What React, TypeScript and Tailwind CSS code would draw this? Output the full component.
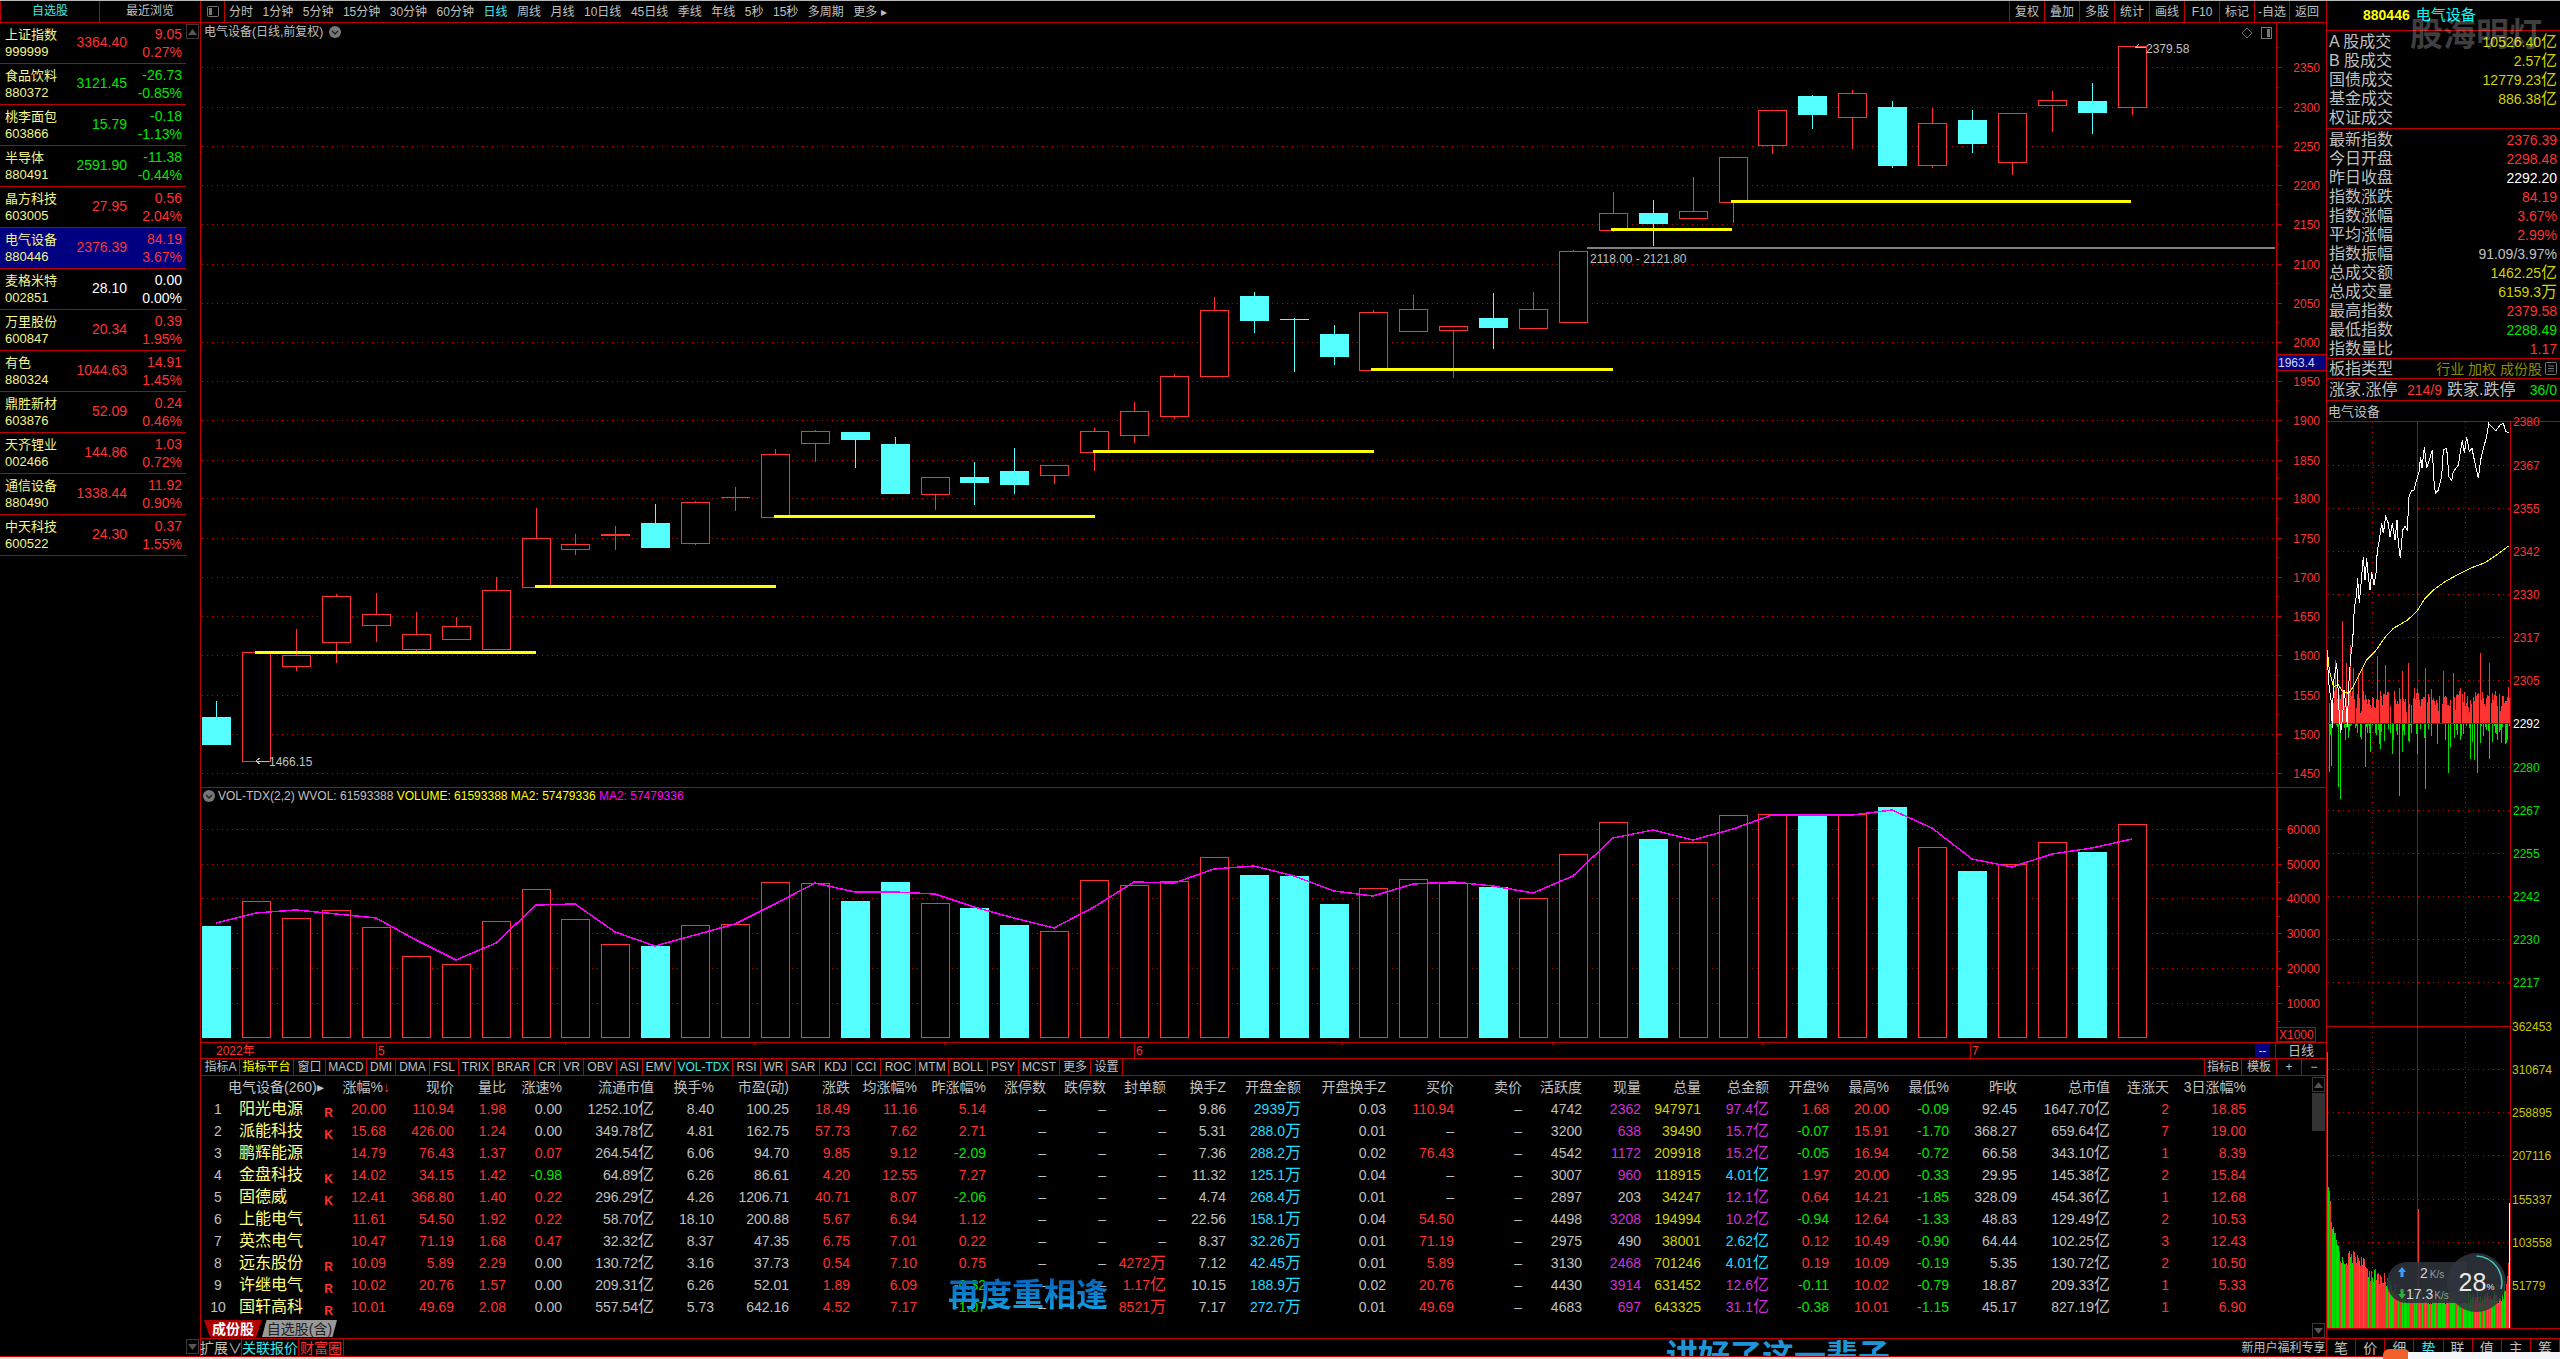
const RED = "#ff3232";
const CYAN = "#54ffff";
const LINE = "#c00000";
const GREEN = "#00e600";
const GRAY = "#c0c0c0";

const tRed = "text-[#ff3232]";
const tGreen = "text-[#00e600]";
const tGray = "text-[#c0c0c0]";
const tCyan = "text-[#1fdcff]";
const tYellow = "text-[#d2d200]";
const tMagenta = "text-[#d030d8]";

const watch = [
  ["上证指数", "999999", "3364.40", "9.05", "0.27%", "r"],
  ["食品饮料", "880372", "3121.45", "-26.73", "-0.85%", "g"],
  ["桃李面包", "603866", "15.79", "-0.18", "-1.13%", "g"],
  ["半导体", "880491", "2591.90", "-11.38", "-0.44%", "g"],
  ["晶方科技", "603005", "27.95", "0.56", "2.04%", "r"],
  ["电气设备", "880446", "2376.39", "84.19", "3.67%", "r"],
  ["麦格米特", "002851", "28.10", "0.00", "0.00%", "w"],
  ["万里股份", "600847", "20.34", "0.39", "1.95%", "r"],
  ["有色", "880324", "1044.63", "14.91", "1.45%", "r"],
  ["鼎胜新材", "603876", "52.09", "0.24", "0.46%", "r"],
  ["天齐锂业", "002466", "144.86", "1.03", "0.72%", "r"],
  ["通信设备", "880490", "1338.44", "11.92", "0.90%", "r"],
  ["中天科技", "600522", "24.30", "0.37", "1.55%", "r"],
];

// top, bottom, high, low, up
const candles: number[][] = [
  [717, 744, 701, 744, 0], [652, 761, 652, 761, 1], [655, 666, 629, 671, 1], [596, 642, 594, 663, 1],
  [614, 625, 593, 642, 1], [634, 649, 612, 651, 1], [626, 639, 617, 639, 1], [590, 649, 577, 650, 1],
  [538, 587, 508, 587, 1], [544, 549, 534, 555, 1], [534, 535, 526, 550, 1], [523, 547, 504, 547, 0],
  [502, 543, 501, 545, 1], [497, 497, 487, 511, 1], [454, 517, 449, 517, 1], [431, 443, 430, 462, 1],
  [432, 439, 432, 468, 0], [444, 493, 437, 494, 0], [477, 494, 477, 510, 1], [477, 482, 462, 505, 0],
  [471, 484, 448, 494, 0], [465, 475, 465, 484, 1], [431, 452, 428, 471, 1], [411, 435, 402, 443, 1],
  [376, 416, 374, 419, 1], [310, 376, 297, 376, 1], [296, 320, 292, 333, 0], [319, 319, 318, 372, 0],
  [334, 356, 325, 365, 0], [312, 370, 310, 370, 1], [309, 331, 295, 331, 1], [326, 330, 326, 378, 1],
  [318, 327, 293, 349, 0], [309, 328, 292, 328, 1], [251, 322, 250, 322, 1], [213, 230, 192, 232, 1],
  [213, 223, 200, 246, 0], [211, 218, 177, 218, 1], [157, 202, 157, 223, 1], [110, 145, 110, 154, 1],
  [96, 114, 95, 129, 0], [93, 117, 90, 149, 1], [107, 165, 101, 168, 0], [123, 165, 108, 168, 1],
  [120, 143, 110, 153, 0], [113, 162, 113, 175, 1], [100, 105, 91, 132, 1], [101, 112, 83, 134, 0],
  [46, 107, 46, 115, 1],
];

const volTop = [
  926, 901, 918, 910, 927, 956, 964, 921, 889, 919, 944, 946, 925, 924, 882, 883, 901, 882, 903, 908, 925, 931, 880, 885, 881,
  857, 875, 876, 904, 888, 879, 883, 887, 898, 854, 822, 839, 842, 815, 814, 816, 814, 807, 847, 871, 864, 842, 852, 824,
];
const volMa = [
  923, 913, 910, 914, 918, 940, 960, 943, 905, 904, 932, 946, 935, 924, 904, 883, 892, 892, 894, 907, 918, 928, 907, 882, 883,
  869, 866, 876, 891, 896, 884, 882, 886, 893, 876, 838, 830, 840, 829, 815, 815, 815, 810, 828, 859, 867, 854, 848, 839,
];

const centerX = (i: number) => Math.round(216.3 + 39.9 * i);

const priceTicks: [string, number][] = [
  ["2350", 67], ["2300", 107], ["2250", 146], ["2200", 185], ["2150", 224], ["2100", 264], ["2050", 303], ["2000", 342],
  ["1950", 381], ["1900", 420], ["1850", 460], ["1800", 498], ["1750", 538], ["1700", 577], ["1650", 616], ["1600", 655],
  ["1550", 695], ["1500", 734], ["1450", 773],
];
const volTicks: [string, number][] = [["60000", 829], ["50000", 864], ["40000", 898], ["30000", 933], ["20000", 968], ["10000", 1003]];

const supports = [
  [255, 536, 652], [535, 776, 586], [774, 1095, 516], [1093, 1374, 451], [1371, 1613, 369], [1611, 1732, 229], [1731, 2131, 201],
];

const noise = (i: number) => {
  const v = Math.sin(i * 12.9898) * 43758.5453;
  return v - Math.floor(v);
};

// page-zoomed coords of the intraday chart, origin 2270,390 at 3x
const zoomPts = (pts: number[][]) => pts.map(([x, y]) => `${2270 + x / 3},${390 + y / 3}`).join(" ");
const whiteLine = [
  [172, 780], [175, 870], [183, 930], [187, 1015], [190, 880], [195, 850], [200, 820], [203, 870], [207, 960], [212, 1030], [218, 980],
  [222, 900], [228, 950], [232, 1010], [236, 890], [240, 830], [244, 780], [248, 760], [250, 710], [253, 655], [260, 610], [263, 565],
  [268, 640], [274, 570], [280, 500], [285, 570], [290, 505], [295, 560], [300, 600], [305, 545], [312, 585], [318, 550], [322, 480],
  [328, 450], [335, 400], [340, 430], [347, 380], [355, 400], [360, 440], [367, 400], [375, 450], [381, 390], [385, 460], [391, 505],
  [398, 420], [405, 408], [412, 420], [417, 320], [425, 300], [432, 300], [440, 270], [447, 245], [452, 200], [456, 235], [463, 170],
  [470, 235], [478, 210], [487, 180], [493, 290], [497, 310], [505, 300], [515, 260], [520, 180], [530, 175], [537, 260], [545, 272],
  [550, 245], [565, 225], [577, 150], [583, 190], [590, 140], [598, 185], [606, 175], [615, 220], [625, 265], [632, 210], [640, 175],
  [650, 140], [656, 100], [665, 110], [678, 122], [690, 105], [700, 100], [708, 125], [716, 127],
];
const yellowLine = [
  [172, 780], [178, 840], [190, 890], [205, 885], [218, 905], [236, 910], [250, 890], [265, 860], [290, 810], [315, 785], [345, 742],
  [370, 715], [410, 692], [440, 665], [465, 625], [490, 600], [525, 575], [570, 550], [600, 535], [645, 518], [680, 495], [716, 468],
];
const redSpikes = [[217, 102], [240, 78], [195, 63], [320, 67], [345, 58], [415, 60], [465, 55], [395, 52], [630, 70], [656, 60], [520, 52], [550, 50], [250, 55], [265, 50], [275, 55], [228, 60]];
const greenSpikes = [[211, 75], [387, 72], [465, 65], [203, 63], [620, 49], [535, 49], [658, 35], [285, 43], [177, 48], [183, 42], [300, 28], [367, 30], [540, 23], [600, 35], [612, 36], [395, 28], [440, 30], [330, 25]];

const tickBars = Array.from({ length: 182 }, (_, i) => {
  const x = 2328 + i;
  const z = (x - 2270) * 3;
  const spikeAt = (list: number[][]) => list.find(([sx]) => Math.abs(sx - z) < 2)?.[1] ?? 0;
  const wave = 8 + 10 * Math.abs(Math.sin(i / 5));
  const r = noise(i) < 0.12 ? 0 : wave + noise(i + 500) * 18;
  const g = noise(i + 900) < 0.5 ? 0 : Math.pow(noise(i + 1300), 1.5) * 20;
  return { x, red: Math.max(r, spikeAt(redSpikes)), green: Math.max(g, spikeAt(greenSpikes)) };
});

const volEnv = [[2328, 1177], [2332, 1223], [2337, 1238], [2342, 1255], [2350, 1250], [2358, 1250], [2370, 1267], [2383, 1272], [2403, 1290], [2503, 1290], [2508, 1258]];
const envAt = (x: number) => {
  for (let i = 1; i < volEnv.length; i++) {
    if (x <= volEnv[i][0]) {
      const [x0, y0] = volEnv[i - 1];
      const [x1, y1] = volEnv[i];
      return y0 + ((y1 - y0) * (x - x0)) / (x1 - x0);
    }
  }
  return 1258;
};
const dayVol = Array.from({ length: 181 }, (_, i) => {
  const x = 2328 + i;
  const top = envAt(x) + noise(i + 77) * 14;
  return { x, top, color: noise(i + 31) < 0.5 ? "#ff3232" : "#00e000" };
});

const intradayLabels: [string, number, string][] = [
  ["2380", 421, RED], ["2367", 465, RED], ["2355", 508, RED], ["2342", 551, RED], ["2330", 594, RED], ["2317", 637, RED], ["2305", 680, RED],
  ["2292", 723, "#ffffff"], ["2280", 767, GREEN], ["2267", 810, GREEN], ["2255", 853, GREEN], ["2242", 896, GREEN], ["2230", 939, GREEN], ["2217", 982, GREEN],
];
const intradayVol: [string, number][] = [["362453", 1026], ["310674", 1069], ["258895", 1112], ["207116", 1155], ["155337", 1199], ["103558", 1242], ["51779", 1285]];

const ROW_GRID =
  "grid grid-cols-[34px_86px_15px_50px_68px_52px_56px_92px_60px_75px_61px_67px_69px_60px_60px_60px_60px_75px_85px_68px_68px_60px_59px_60px_68px_60px_60px_60px_68px_93px_59px_77px]";

const columns = ["涨幅%", "现价", "量比", "涨速%", "流通市值", "换手%", "市盈(动)", "涨跌", "均涨幅%", "昨涨幅%", "涨停数", "跌停数", "封单额", "换手Z", "开盘金额", "开盘换手Z", "买价", "卖价", "活跃度", "现量", "总量", "总金额", "开盘%", "最高%", "最低%", "昨收", "总市值", "连涨天", "3日涨幅%"];

const stockRows = [
  ["阳光电源", "R", "20.00", "110.94", "1.98", "0.00", "1252.10亿", "8.40", "100.25", "18.49", "11.16", "5.14", "–", "–", "–", "9.86", "2939万", "0.03", "110.94", "–", "4742", "2362", "947971", "97.4亿", "1.68", "20.00", "-0.09", "92.45", "1647.70亿", "2", "18.85"],
  ["派能科技", "K", "15.68", "426.00", "1.24", "0.00", "349.78亿", "4.81", "162.75", "57.73", "7.62", "2.71", "–", "–", "–", "5.31", "288.0万", "0.01", "–", "–", "3200", "638", "39490", "15.7亿", "-0.07", "15.91", "-1.70", "368.27", "659.64亿", "7", "19.00"],
  ["鹏辉能源", "", "14.79", "76.43", "1.37", "0.07", "264.54亿", "6.06", "94.70", "9.85", "9.12", "-2.09", "–", "–", "–", "7.36", "288.2万", "0.02", "76.43", "–", "4542", "1172", "209918", "15.2亿", "-0.05", "16.94", "-0.72", "66.58", "343.10亿", "1", "8.39"],
  ["金盘科技", "K", "14.02", "34.15", "1.42", "-0.98", "64.89亿", "6.26", "86.61", "4.20", "12.55", "7.27", "–", "–", "–", "11.32", "125.1万", "0.04", "–", "–", "3007", "960", "118915", "4.01亿", "1.97", "20.00", "-0.33", "29.95", "145.38亿", "2", "15.84"],
  ["固德威", "K", "12.41", "368.80", "1.40", "0.22", "296.29亿", "4.26", "1206.71", "40.71", "8.07", "-2.06", "–", "–", "–", "4.74", "268.4万", "0.01", "–", "–", "2897", "203", "34247", "12.1亿", "0.64", "14.21", "-1.85", "328.09", "454.36亿", "1", "12.68"],
  ["上能电气", "", "11.61", "54.50", "1.92", "0.22", "58.70亿", "18.10", "200.88", "5.67", "6.94", "1.12", "–", "–", "–", "22.56", "158.1万", "0.04", "54.50", "–", "4498", "3208", "194994", "10.2亿", "-0.94", "12.64", "-1.33", "48.83", "129.49亿", "2", "10.53"],
  ["英杰电气", "", "10.47", "71.19", "1.68", "0.47", "32.32亿", "8.37", "47.35", "6.75", "7.01", "0.22", "–", "–", "–", "8.37", "32.26万", "0.01", "71.19", "–", "2975", "490", "38001", "2.62亿", "0.12", "10.49", "-0.90", "64.44", "102.25亿", "3", "12.43"],
  ["远东股份", "R", "10.09", "5.89", "2.29", "0.00", "130.72亿", "3.16", "37.73", "0.54", "7.10", "0.75", "–", "–", "4272万", "7.12", "42.45万", "0.01", "5.89", "–", "3130", "2468", "701246", "4.01亿", "0.19", "10.09", "-0.19", "5.35", "130.72亿", "2", "10.50"],
  ["许继电气", "R", "10.02", "20.76", "1.57", "0.00", "209.31亿", "6.26", "52.01", "1.89", "6.09", "-0.32", "–", "–", "1.17亿", "10.15", "188.9万", "0.02", "20.76", "–", "4430", "3914", "631452", "12.6亿", "-0.11", "10.02", "-0.79", "18.87", "209.33亿", "1", "5.33"],
  ["国轩高科", "R", "10.01", "49.69", "2.08", "0.00", "557.54亿", "5.73", "642.16", "4.52", "7.17", "-1.07", "–", "–", "8521万", "7.17", "272.7万", "0.01", "49.69", "–", "4683", "697", "643325", "31.1亿", "-0.38", "10.01", "-1.15", "45.17", "827.19亿", "1", "6.90"],
];

const signColor = (v: string) => (v.startsWith("-") ? tGreen : v === "0.00" ? tGray : tRed);

function cellColor(col: number, v: string) {
  if (v === "–") return tGray;
  if ([3, 9, 22].includes(col)) return signColor(v);
  if ([0, 1, 2, 7, 8, 12, 16, 23, 27, 28].includes(col)) return tRed;
  if (col === 24) return tGreen;
  if (col === 14) return tCyan;
  if (col === 19) return v === "203" || v === "490" ? tGray : tMagenta;
  if (col === 20) return tYellow;
  if (col === 21) return parseFloat(v) < 5 ? tCyan : tMagenta;
  return tGray;
}

function Num({ value }: { value: string }) {
  const unit = /[亿万]$/.test(value);
  return (
    <>
      {unit ? value.slice(0, -1) : value}
      {unit && <span className="text-[16px]">{value.slice(-1)}</span>}
    </>
  );
}

const infoTop = [
  ["A 股成交", "10526.40亿", tYellow],
  ["B 股成交", "2.57亿", tYellow],
  ["国债成交", "12779.23亿", tYellow],
  ["基金成交", "886.38亿", tYellow],
  ["权证成交", "", tYellow],
];
const infoMid = [
  ["最新指数", "2376.39", tRed],
  ["今日开盘", "2298.48", tRed],
  ["昨日收盘", "2292.20", "text-white"],
  ["指数涨跌", "84.19", tRed],
  ["指数涨幅", "3.67%", tRed],
  ["平均涨幅", "2.99%", tRed],
  ["指数振幅", "91.09/3.97%", tGray],
  ["总成交额", "1462.25亿", tYellow],
  ["总成交量", "6159.3万", tYellow],
  ["最高指数", "2379.58", tRed],
  ["最低指数", "2288.49", tGreen],
  ["指数量比", "1.17", tRed],
];

const periods = ["分时", "1分钟", "5分钟", "15分钟", "30分钟", "60分钟", "日线", "周线", "月线", "10日线", "45日线", "季线", "年线", "5秒", "15秒", "多周期", "更多 ▸"];
const tools = ["复权", "叠加", "多股", "统计", "画线", "F10", "标记", "-自选", "返回"];
const indicators = ["指标A", "指标平台", "窗口", "MACD", "DMI", "DMA", "FSL", "TRIX", "BRAR", "CR", "VR", "OBV", "ASI", "EMV", "VOL-TDX", "RSI", "WR", "SAR", "KDJ", "CCI", "ROC", "MTM", "BOLL", "PSY", "MCST", "更多", "设置"];

function InfoRow({ label, value, color }: { label: string; value: string; color: string }) {
  return (
    <div className="flex h-[19px] items-center justify-between pl-[2px] pr-[3px]">
      <span className={`text-[16px] leading-none ${tGray}`}>{label}</span>
      <span className={`text-[14px] leading-none ${color}`}>
        <Num value={value} />
      </span>
    </div>
  );
}

function ScrollBtn({ down }: { down?: boolean }) {
  return (
    <div className="flex h-[15px] w-[13px] items-center justify-center border border-[#3a3a3a] bg-black">
      <svg width="9" height="6" viewBox="0 0 9 6">
        <path d={down ? "M0 0H9L4.5 6Z" : "M0 6H9L4.5 0Z"} fill="#555" />
      </svg>
    </div>
  );
}

function WatchList() {
  return (
    <aside className="flex w-[200px] shrink-0 flex-col">
      <div className="flex h-[22px] border-b border-[#c00000] text-[12px] leading-[21px]">
        <div className="w-[100px] border-x border-[#c00000] text-center text-[#3fe8e8]">自选股</div>
        <div className={`w-[100px] text-center ${tGray}`}>最近浏览</div>
      </div>
      <div className="flex flex-1">
        <div className="w-[186px]">
          {watch.map(([name, code, price, chg, pct, tone]) => {
            const color = tone === "r" ? tRed : tone === "g" ? tGreen : "text-white";
            return (
              <div key={code} className={`flex h-[41px] border-b border-[#c00000] pb-px pr-[4px] ${code === "880446" ? "bg-[#000080]" : ""}`}>
                <div className="flex w-[77px] flex-col justify-center pl-[5px] text-[13px] leading-[17px] text-[#f5f58c]">
                  <span>{name}</span>
                  <span>{code}</span>
                </div>
                <div className={`flex w-[50px] items-center justify-end text-[14px] ${color}`}>{price}</div>
                <div className={`flex flex-1 flex-col items-end justify-center text-[14px] leading-[18px] ${color}`}>
                  <span>{chg}</span>
                  <span>{pct}</span>
                </div>
              </div>
            );
          })}
        </div>
        <div className="flex flex-1 flex-col justify-between pb-[2px] pt-px">
          <ScrollBtn />
          <ScrollBtn down />
        </div>
      </div>
    </aside>
  );
}

function TopBar() {
  return (
    <div className="flex h-[22px] items-center border-b border-[#c00000] text-[12px] leading-none">
      <div className="flex h-full w-[24px] items-center justify-center border-r border-[#c00000]">
        <svg width="12" height="11" viewBox="0 0 12 11">
          <rect x="0.5" y="0.5" width="11" height="10" rx="1" fill="none" stroke="#777" />
          <rect x="2" y="2" width="3" height="7" fill="#777" />
        </svg>
      </div>
      <div className="flex gap-[9.5px] pl-[4px]">
        {periods.map((p) => (
          <span key={p} className={p === "日线" ? "text-[#3fe8e8]" : tGray}>
            {p}
          </span>
        ))}
      </div>
      <div className="ml-auto flex h-full">
        {tools.map((t) => (
          <div key={t} className={`flex w-[35px] items-center justify-center border-l border-[#c00000] ${tGray}`}>
            {t}
          </div>
        ))}
        <div className="w-[2px]" />
      </div>
    </div>
  );
}

function Dotted({ y, x1, x2 }: { y: number; x1: number; x2: number }) {
  return <line x1={x1} x2={x2} y1={y + 0.5} y2={y + 0.5} stroke="#c80000" strokeDasharray="1 4" />;
}

function KlineChart() {
  return (
    <svg className="block h-[764px] w-[2125px]" viewBox="201 23 2125 764" shapeRendering="crispEdges">
      {priceTicks.map(([, y]) => (
        <Dotted key={y} y={y} x1={202} x2={2275} />
      ))}
      <text x={204} y={36} fontSize={12} fill={GRAY}>电气设备(日线,前复权)</text>
      <circle cx={335} cy={32} r={6} fill="#777" shapeRendering="auto" />
      <path d="M332 31L335 34L338 31" fill="none" stroke="#222" strokeWidth={1.5} shapeRendering="auto" />
      <path d="M2247 28L2252 33L2247 38L2242 33Z" fill="none" stroke="#666" shapeRendering="auto" />
      <rect x={2261.5} y={27.5} width={10} height={11} rx={1} fill="none" stroke="#777" />
      <rect x={2267} y={29} width={3} height={8} fill="#777" />

      {candles.map(([top, bot, hi, lo, up], i) => {
        const cx = centerX(i);
        const color = up ? RED : CYAN;
        return (
          <g key={i}>
            <line x1={cx + 0.5} x2={cx + 0.5} y1={hi} y2={lo} stroke={color} />
            {bot - top <= 0 ? (
              <line x1={cx - 14} x2={cx + 15} y1={top + 0.5} y2={top + 0.5} stroke={color} />
            ) : up ? (
              <rect x={cx - 13.5} y={top + 0.5} width={28} height={bot - top} fill="#000" stroke={RED} />
            ) : (
              <rect x={cx - 14} y={top} width={29} height={bot - top + 1} fill={CYAN} />
            )}
          </g>
        );
      })}

      {supports.map(([x1, x2, y]) => (
        <rect key={x1} x={x1} y={y - 1} width={x2 - x1} height={3} fill="#ffff00" />
      ))}
      <rect x={1587} y={247} width={688} height={2} fill="#808080" />
      <text x={1590} y={263} fontSize={12} fill={GRAY}>2118.00 - 2121.80</text>
      <text x={2146} y={53} fontSize={12} fill={GRAY}>2379.58</text>
      <path d="M2146 47H2136L2139 44" fill="none" stroke={GRAY} />
      <text x={269} y={766} fontSize={12} fill={GRAY}>1466.15</text>
      <path d="M269 761H256M256 761L260 758M256 761L260 764" fill="none" stroke={GRAY} />

      <line x1={2276.5} x2={2276.5} y1={23} y2={787} stroke={LINE} />
      {priceTicks.map(([label, y]) => (
        <g key={label}>
          <line x1={2277} x2={2282} y1={y + 0.5} y2={y + 0.5} stroke={LINE} />
          <line x1={2277} x2={2279} y1={y - 19.5} y2={y - 19.5} stroke={LINE} />
          <text x={2320} y={y + 5} fontSize={12} fill={RED} textAnchor="end">{label}</text>
        </g>
      ))}
      <rect x={2276.5} y={354.5} width={50} height={16} fill="#000080" stroke={LINE} />
      <text x={2278} y={367} fontSize={12} fill="#d8d8ff">1963.4</text>
    </svg>
  );
}

function VolumeChart() {
  return (
    <svg className="block h-[254px] w-[2125px]" viewBox="201 788 2125 254" shapeRendering="crispEdges">
      {volTicks.map(([, y]) => (
        <Dotted key={y} y={y} x1={202} x2={2275} />
      ))}
      <circle cx={209} cy={796} r={6} fill="#777" shapeRendering="auto" />
      <path d="M206 795L209 798L212 795" fill="none" stroke="#222" strokeWidth={1.5} shapeRendering="auto" />
      <text x={218} y={800} fontSize={12} fill={GRAY}>
        VOL-TDX(2,2) WVOL: 61593388 <tspan fill="#ffff00">VOLUME: 61593388 MA2: 57479336</tspan> <tspan fill="#ff00ff">MA2: 57479336</tspan>
      </text>
      {volTop.map((top, i) => {
        const cx = centerX(i);
        return candles[i][4] ? (
          <rect key={i} x={cx - 13.5} y={top + 0.5} width={28} height={1037 - top} fill="#000" stroke={RED} />
        ) : (
          <rect key={i} x={cx - 14} y={top} width={29} height={1038 - top} fill={CYAN} />
        );
      })}
      <polyline points={volMa.map((y, i) => `${centerX(i)},${y}`).join(" ")} fill="none" stroke="#ff00ff" strokeWidth={1.5} />

      <rect x={2276} y={788} width={2} height={254} fill={LINE} />
      {volTicks.map(([label, y]) => (
        <g key={label}>
          <line x1={2278} x2={2282} y1={y + 0.5} y2={y + 0.5} stroke={LINE} />
          <line x1={2278} x2={2280} y1={y + 18} y2={y + 18} stroke={LINE} />
          <text x={2320} y={y + 5} fontSize={12} fill={RED} textAnchor="end">{label}</text>
        </g>
      ))}
      <rect x={2277.5} y={1027.5} width={38} height={14} fill="none" stroke={LINE} />
      <text x={2279} y={1039} fontSize={12} fill={RED}>X1000</text>
    </svg>
  );
}

function DateAxis() {
  return (
    <div className="flex h-[16px] border-b border-[#c00000]">
      <svg className="block h-[15px] w-[2054px]" viewBox="201 1043 2054 15" shapeRendering="crispEdges">
        <text x={216} y={1055} fontSize={12} fill={RED}>2022年</text>
        {[[376, "5"], [1134, "6"], [1970, "7"]].map(([x, t]) => (
          <g key={t as string}>
            <line x1={(x as number) + 0.5} x2={(x as number) + 0.5} y1={1043} y2={1058} stroke={LINE} />
            <text x={(x as number) + 2} y={1055} fontSize={12} fill={RED}>{t}</text>
          </g>
        ))}
        {[565, 754, 944, 1342, 1552, 1762].map((x) => (
          <line key={x} x1={x + 0.5} x2={x + 0.5} y1={1043} y2={1045} stroke={LINE} />
        ))}
      </svg>
      <div className="flex w-[15px] items-center justify-center bg-[#000080] text-[11px] leading-none text-white">--</div>
      <div className="w-[5px]" />
      <div className={`flex flex-1 items-center justify-center border-l border-[#c00000] text-[13px] leading-none ${tGray}`}>日线</div>
    </div>
  );
}

function IndicatorTabs() {
  return (
    <div className="flex h-[17px] border-b border-[#c00000] text-[12px] leading-none">
      <div className="w-px" />
      <div className="grid grid-cols-[37px_54px_32px_41px_29px_34px_29px_34px_42px_25px_24px_33px_26px_32px_58px_28px_26px_33px_32px_29px_35px_33px_39px_31px_41px_31px_32px] border-r border-[#c00000]">
        {indicators.map((t, i) => (
          <div key={t} className={`flex items-center justify-center whitespace-nowrap ${i > 0 ? "border-l border-[#c00000]" : ""} ${t === "指标平台" ? "text-[#ffff00]" : t === "VOL-TDX" ? "text-[#3fe8e8]" : tGray}`}>
            {t}
          </div>
        ))}
      </div>
      <div className="ml-auto flex h-full">
        {["指标B", "模板", "+", "−"].map((t, i) => (
          <div key={t} className={`flex items-center justify-center border-l border-[#c00000] ${i === 0 ? "w-[37px]" : i === 1 ? "w-[35px]" : "w-[25px]"} ${tGray}`}>
            {t}
          </div>
        ))}
      </div>
    </div>
  );
}

function StockTable() {
  return (
    <div className="flex h-[263px] border-b border-[#c00000]">
      <div className="flex flex-1 flex-col">
        <div className={`${ROW_GRID} h-[22px] items-center text-[14px] leading-none ${tGray}`}>
          <div className="col-span-3 pl-[27px]">电气设备(260)▸</div>
          {columns.map((c, i) => (
            <div key={c} className="whitespace-nowrap text-right">
              {c}
              {i === 0 && <span className={`-mr-[4px] ${tRed}`}>↓</span>}
            </div>
          ))}
        </div>
        {stockRows.map((row, r) => (
          <div key={row[0]} className={`${ROW_GRID} h-[22px] items-center text-[14px] leading-none`}>
            <div className={`text-center ${tGray}`}>{r + 1}</div>
            <div className="pl-[4px] text-[16px] text-[#ffff80]">{row[0]}</div>
            <div className={`pt-[8px] text-center text-[12px] font-bold ${tRed}`}>{row[1]}</div>
            {row.slice(2).map((v, c) => (
              <div key={c} className={`whitespace-nowrap text-right ${cellColor(c, v)}`}>
                <Num value={v} />
              </div>
            ))}
          </div>
        ))}
        <div className="mt-auto flex h-[18px] pb-px pl-[3px] text-[14px] leading-none">
          <div className="flex w-[58px] items-center justify-center whitespace-nowrap bg-[#b00000] font-bold text-white [clip-path:polygon(0_0,100%_0,90%_100%,10%_100%)]">成份股</div>
          <div className="flex w-[75px] items-center justify-center whitespace-nowrap bg-[#999] text-[#222] [clip-path:polygon(6%_0,100%_0,94%_100%,0_100%)]">自选股(含)</div>
        </div>
      </div>
      <div className="mr-px flex w-[13px] flex-col pt-px">
        <ScrollBtn />
        <div className="mt-px h-[38px] bg-[#333]" />
        <div className="mt-auto">
          <ScrollBtn down />
        </div>
      </div>
    </div>
  );
}

function BottomBar() {
  return (
    <div className="flex h-[17px] items-center whitespace-nowrap text-[14px] leading-none">
      <div className={`flex h-full w-[41px] items-center justify-center border-r border-[#c00000] ${tGray}`}>扩展∨</div>
      <div className="flex h-full w-[57px] items-center justify-center border-r border-[#c00000] text-[#3fe8e8]">关联报价</div>
      <div className={`flex h-full w-[45px] items-center justify-center border-r border-[#c00000] ${tRed}`}>财富圈</div>
      <div className={`ml-auto w-[85px] text-center text-[12px] ${tGray}`}>新用户福利专享</div>
    </div>
  );
}

function InfoPanel() {
  return (
    <div className="flex shrink-0 flex-col">
      <div className="flex h-[30px] items-center border-b border-[#c00000] pl-[36px]">
        <span className="text-[14px] font-bold text-[#ffff00]">880446</span>
        <span className="ml-[6px] text-[15px] text-[#00ffff]">电气设备</span>
      </div>
      <div className="h-[98px] border-b border-[#c00000] pt-px">
        {infoTop.map(([l, v, c]) => (
          <InfoRow key={l} label={l} value={v} color={c} />
        ))}
      </div>
      <div className="h-[230px] border-b border-[#c00000] pt-px">
        {infoMid.map(([l, v, c]) => (
          <InfoRow key={l} label={l} value={v} color={c} />
        ))}
      </div>
      <div className="flex h-[20px] items-center justify-between border-b border-[#c00000] pl-[2px] pr-[3px]">
        <span className={`text-[16px] leading-none ${tGray}`}>板指类型</span>
        <span className="flex items-center gap-[3px] text-[14px] leading-none text-[#8c8c00]">
          行业 加权 成份股
          <svg width="12" height="13" viewBox="0 0 12 13">
            <rect x="0.5" y="0.5" width="11" height="12" rx="1" fill="none" stroke="#777" />
            <path d="M3 4H9M3 6.5H9M3 9H9" stroke="#777" />
          </svg>
        </span>
      </div>
      <div className="flex h-[22px] items-center border-b border-[#c00000] pl-[2px] pr-[3px] text-[14px] leading-none">
        <span className={`w-[78px] text-[16px] ${tGray}`}>涨家.涨停</span>
        <span className={`w-[40px] ${tRed}`}>214/9</span>
        <span className={`text-[16px] ${tGray}`}>跌家.跌停</span>
        <span className={`ml-auto ${tGreen}`}>36/0</span>
      </div>
      <div className={`flex h-[21px] items-center border-b border-[#c00000] pl-px text-[13px] leading-none ${tGray}`}>电气设备</div>
    </div>
  );
}

function IntradayChart() {
  const hLines = [465, 508, 551, 594, 637, 680, 767, 810, 853, 896, 939, 982, 1069, 1112, 1155, 1199, 1242, 1285];
  return (
    <div className="h-[917px] border-b border-[#c00000]">
      <svg className="block h-[916px] w-[233px] overflow-visible" viewBox="2327 422 233 916" shapeRendering="crispEdges">
        {hLines.map((y) => (
          <Dotted key={y} y={y} x1={2328} x2={2509} />
        ))}
        {[2372, 2465].map((x) => (
          <line key={x} x1={x + 0.5} x2={x + 0.5} y1={422} y2={1328} stroke="#c80000" strokeDasharray="1 4" />
        ))}
        <line x1={2417.5} x2={2417.5} y1={422} y2={1328} stroke={LINE} />
        <line x1={2510} x2={2510} y1={422} y2={1328} stroke={LINE} />
        <line x1={2327} x2={2510} y1={1026.5} y2={1026.5} stroke={LINE} />
        <line x1={2327} x2={2560} y1={1328.5} y2={1328.5} stroke={LINE} />

        {tickBars.map((b) => (
          <g key={b.x}>
            {b.red > 0 && <rect x={b.x} y={723 - b.red} width={1} height={b.red} fill={RED} />}
            {b.green > 0 && <rect x={b.x} y={724} width={1} height={b.green} fill="#00e000" />}
          </g>
        ))}
        <line x1={2327} x2={2510} y1={723.5} y2={723.5} stroke={LINE} />
        <polyline points={zoomPts(whiteLine)} fill="none" stroke="#ffffff" />
        <polyline points={zoomPts(yellowLine)} fill="none" stroke="#ffff00" />

        <rect x={2327} y={1052} width={1} height={276} fill={RED} />
        {dayVol.map((b) => (
          <rect key={b.x} x={b.x} y={b.top} width={1} height={1328 - b.top} fill={b.color} />
        ))}
        <rect x={2418} y={1209} width={1} height={119} fill={RED} />
        <rect x={2509} y={1203} width={1} height={125} fill="#ffffff" />

        {intradayLabels.map(([t, y, c]) => (
          <text key={t} x={2513} y={y + 5} fontSize={12} fill={c}>{t}</text>
        ))}
        {intradayVol.map(([t, y]) => (
          <text key={t} x={2512} y={y + 5} fontSize={12} fill="#c8c800">{t}</text>
        ))}
      </svg>
    </div>
  );
}

function NetWidget() {
  return (
    <div className="absolute left-[2387px] top-[1253px] h-[60px] w-[120px]">
      <div className="absolute left-0 top-[9px] h-[41px] w-[80px] rounded-l-[20px] bg-[#2c3138]/90 text-[#d8d8d8]">
        <svg className="absolute left-[10px] top-[4px]" width="10" height="34" viewBox="0 0 10 34">
          <path d="M5 1L9 6H6.5V11H3.500V6H1Z" fill="#3aa0ff" />
          <path d="M5 33L9 28H6.500V23H3.500V28H1Z" fill="#2fae3a" />
        </svg>
        <div className="absolute left-[32px] top-[2px] flex items-baseline text-[14px] leading-[18px]">
          <span className="ml-[1px]">2</span>
          <span className="ml-[2px] text-[10px] text-[#999]">K/s</span>
        </div>
        <div className="absolute left-[19px] top-[23px] flex items-baseline text-[14px] leading-[18px]">
          17.3<span className="ml-[1px] text-[10px] text-[#999]">K/s</span>
        </div>
      </div>
      <div className="absolute left-[60px] top-0 flex h-[59px] w-[59px] items-center justify-center rounded-full bg-[#30353d]/85 text-[#e8e8e8]">
        <svg className="absolute inset-0" width="59" height="59" viewBox="0 0 59 59">
          <path d="M29.500 3A26.500 26.500 0 0 1 54 36" fill="none" stroke="#3cc8c0" strokeWidth="1.500" />
        </svg>
        <span className="text-[25px] font-light leading-none">28</span>
        <span className="mt-[9px] text-[9px] leading-none">%</span>
      </div>
    </div>
  );
}

export default function App() {
  return (
    <div className="relative flex h-[1359px] w-[2560px] flex-col overflow-hidden bg-black [font-family:'Liberation_Sans','Noto_Sans_CJK_SC',sans-serif]">
      <div className="h-px bg-[#b8b8b8]" />
      <div className="flex h-[1355px]">
        <WatchList />
        <main className="w-[2126px] shrink-0 border-l border-[#c00000]">
          <TopBar />
          <div className="h-[765px] border-b border-[#c00000]">
            <KlineChart />
          </div>
          <div className="h-[255px] border-b border-[#c00000]">
            <VolumeChart />
          </div>
          <DateAxis />
          <IndicatorTabs />
          <StockTable />
          <BottomBar />
        </main>
        <section className="flex flex-1 flex-col border-l border-[#c00000]">
          <InfoPanel />
          <IntradayChart />
          <div className="grid h-[17px] grid-cols-8 text-[14px] leading-none">
            {["笔", "价", "细", "势", "联", "值", "主", "筹"].map((t) => (
              <div key={t} className={`flex items-center justify-center border-r border-[#c00000] ${t === "势" ? "text-[#3fe8e8]" : tGray}`}>
                {t}
              </div>
            ))}
          </div>
        </section>
      </div>
      <div className="h-px bg-[#c00000]" />
      <div className="h-[2px] bg-[#e4e4e4]" />

      {/* things floating above the terminal: watermark, video subtitles, net meter */}
      <div className="absolute left-[2410px] top-[15px] text-[33px] font-bold leading-[40px] text-white/25">股海明灯</div>
      <div className="absolute left-[948px] top-[1276px] bg-linear-to-b from-[#0a5cb4] to-[#18a8e8] bg-clip-text text-[32px] font-bold leading-[38px] text-transparent">再度重相逢</div>
      <div className="absolute left-[1666px] top-[1337px] h-[19px] overflow-hidden text-[32px] font-bold leading-[38px] text-[#1c96d8]">讲好了这一辈子</div>
      <NetWidget />
      <div className="absolute left-[2383px] top-[1349px] h-[10px] w-[27px] rounded-t-[6px] bg-[#f0602a]" />
      <div className="absolute left-[2408px] top-[1352px] h-[7px] w-[152px] bg-[#f4f6fa]" />
    </div>
  );
}
